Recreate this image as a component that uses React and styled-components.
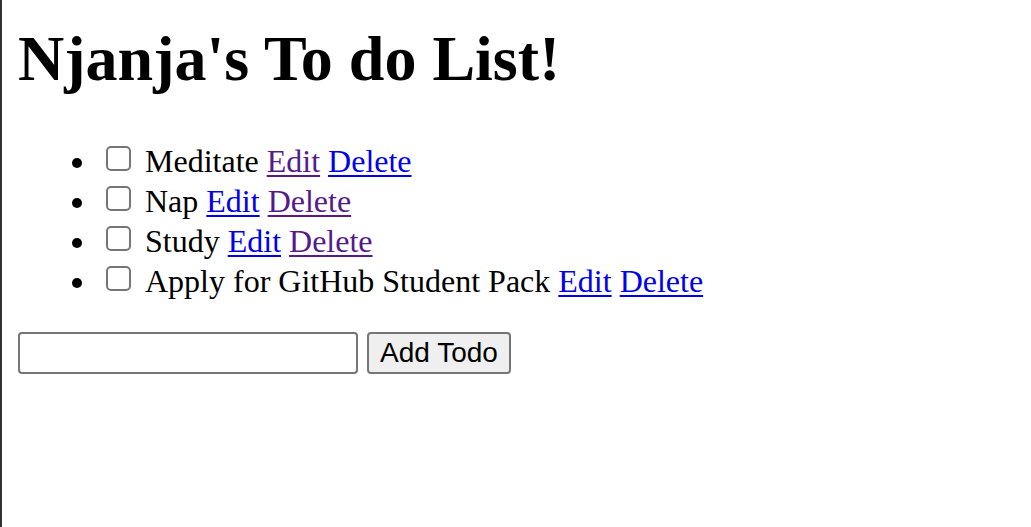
import React, { useState } from 'react'
import styled, { createGlobalStyle } from 'styled-components'

const GlobalStyle = createGlobalStyle`
  html, body {
    margin: 0;
    background: #fff;
  }
  body {
    font-family: "Liberation Serif", "Times New Roman", serif;
    color: #000;
  }
`

const Page = styled.div`
  min-height: 100vh;
  box-sizing: border-box;
  border-left: 2px solid #333;
  padding: 0 16px;
`

const Title = styled.h1`
  font-size: 64px;
  font-weight: 700;
  margin: 0;
  padding: 22px 0 45px;
  line-height: 1.15;
`

const List = styled.ul`
  margin: 0;
  padding-left: 80px;
  font-size: 32px;
  line-height: 40px;
`

const Item = styled.li`
  height: 40px;
`

const Check = styled.input`
  appearance: none;
  width: 25px;
  height: 25px;
  box-sizing: border-box;
  border: 2px solid #767676;
  border-radius: 5px;
  margin: 0 14px 0 8px;
  vertical-align: 1px;
  background: #fff;
`

const Link = styled.a`
  color: ${p => (p.visited ? '#551a8b' : '#0000ee')};
  text-decoration: underline;
  text-decoration-thickness: 2px;
  text-underline-offset: 3px;
`

const Form = styled.form`
  display: flex;
  gap: 9px;
  margin-top: 31px;
`

const Field = styled.input`
  width: 340px;
  height: 42px;
  box-sizing: border-box;
  border: 2px solid #767676;
  border-radius: 4px;
  font-size: 26px;
`

const Button = styled.button`
  width: 144px;
  height: 42px;
  box-sizing: border-box;
  padding: 0;
  border: 2px solid #767676;
  border-radius: 4px;
  background: #efefef;
  font-family: "Liberation Sans", Arial, sans-serif;
  font-size: 28px;
  color: #000;
`

const todos = [
  { title: 'Meditate', visited: [true, false] },
  { title: 'Nap', visited: [false, true] },
  { title: 'Study', visited: [false, true] },
  { title: 'Apply for GitHub Student Pack', visited: [false, false] },
]

const App = () => {
  const [text, setText] = useState('')
  return (
    <Page>
      <GlobalStyle />
      <Title>Njanja's To do List!</Title>
      <List>
        {todos.map(t => (
          <Item key={t.title}>
            <Check type="checkbox" />
            {t.title} <Link href="#" visited={t.visited[0] ? 1 : 0}>Edit</Link>{' '}
            <Link href="#" visited={t.visited[1] ? 1 : 0}>Delete</Link>
          </Item>
        ))}
      </List>
      <Form onSubmit={e => e.preventDefault()}>
        <Field value={text} onChange={e => setText(e.target.value)} />
        <Button type="submit">Add Todo</Button>
      </Form>
    </Page>
  )
}

export default App
